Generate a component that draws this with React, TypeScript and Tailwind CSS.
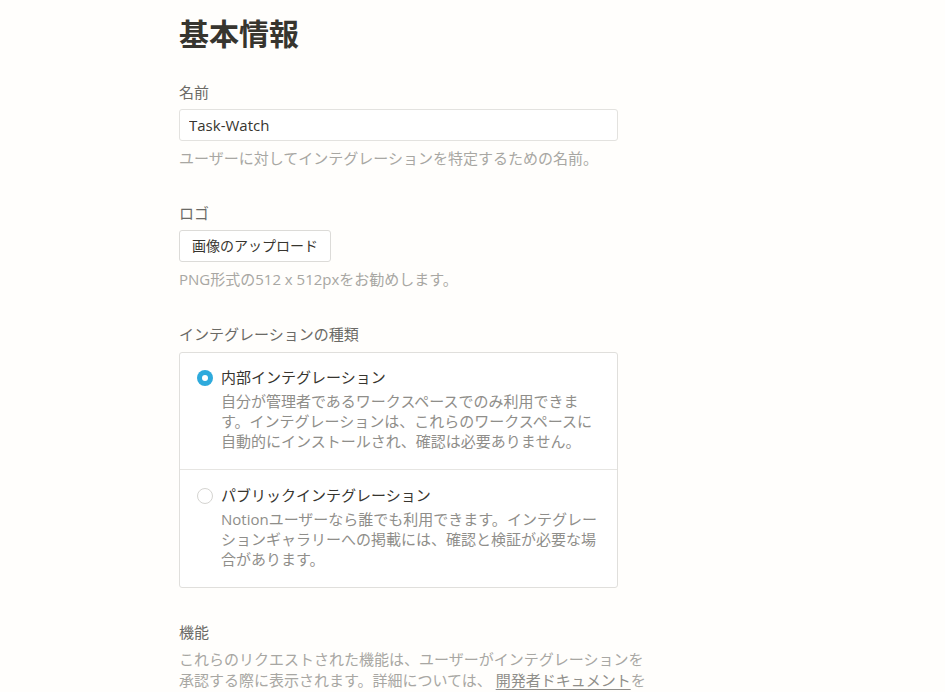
import React, { useState } from 'react';

const FONT = { fontFamily: '"Open Sans", "Noto Sans CJK JP", sans-serif' };

interface OptionProps {
  checked: boolean;
  title: string;
  description: string;
  onSelect: () => void;
  first?: boolean;
}

const Radio: React.FC<{ checked: boolean }> = ({ checked }) =>
  checked ? (
    <span className="flex h-4 w-4 shrink-0 items-center justify-center rounded-full bg-[#2eaadc]">
      <span className="h-[6px] w-[6px] rounded-full bg-white" />
    </span>
  ) : (
    <span className="h-4 w-4 shrink-0 rounded-full border-[1.5px] border-[#d5d4d1] bg-white" />
  );

const TypeOption: React.FC<OptionProps> = ({ checked, title, description, onSelect, first }) => (
  <div
    onClick={onSelect}
    className={`cursor-pointer pl-[17px] pr-[18px] pb-[18px] ${first ? 'pt-[14px]' : 'pt-[15px]'}`}
  >
    <div className="flex items-center gap-2">
      <Radio checked={checked} />
      <span className="text-[15px] leading-[21px] text-[#37352f]">{title}</span>
    </div>
    <p className="mt-[3px] pl-6 text-[15px] leading-[20px] text-[#8f8e8a]">{description}</p>
  </div>
);

export default function App() {
  const [name, setName] = useState('Task-Watch');
  const [kind, setKind] = useState<'internal' | 'public'>('internal');

  return (
    <div className="h-[692px] overflow-hidden bg-[#fffefc]" style={FONT}>
      <div className="ml-[179px] w-[470px] pt-[14px]">
        <h1 className="text-[30px] font-bold leading-[40px] text-[#37352f]">基本情報</h1>

        {/* 名前 */}
        <div className="mt-[28px]">
          <label className="block text-[15px] leading-[20px] text-[#6b6a66]">名前</label>
          <input
            type="text"
            value={name}
            onChange={(e) => setName(e.target.value)}
            className="mt-[7px] h-8 w-[439px] rounded-[3px] border border-[#e3e2df] bg-white px-[9px] text-[15px] text-[#37352f] outline-none"
          />
          <p className="mt-[7px] text-[15px] leading-[21px] text-[#a8a7a3]">
            ユーザーに対してインテグレーションを特定するための名前。
          </p>
        </div>

        {/* ロゴ */}
        <div className="mt-[34px]">
          <label className="block text-[15px] leading-[20px] text-[#6b6a66]">ロゴ</label>
          <button
            type="button"
            className="mt-[7px] h-8 rounded-[3px] border border-[#dcdbd8] bg-white px-3 text-[14px] leading-[20px] text-[#37352f]"
          >
            画像のアップロード
          </button>
          <p className="mt-[7px] text-[15px] leading-[21px] text-[#a8a7a3]">PNG形式の512 x 512pxをお勧めします。</p>
        </div>

        {/* インテグレーションの種類 */}
        <div className="mt-[34px]">
          <label className="block text-[15px] leading-[20px] text-[#6b6a66]">インテグレーションの種類</label>
          <div className="mt-[8px] w-[439px] divide-y divide-[#e6e5e2] rounded-[3px] border border-[#e0dfdc] bg-white">
            <TypeOption
              first
              checked={kind === 'internal'}
              onSelect={() => setKind('internal')}
              title="内部インテグレーション"
              description="自分が管理者であるワークスペースでのみ利用できます。インテグレーションは、これらのワークスペースに自動的にインストールされ、確認は必要ありません。"
            />
            <TypeOption
              checked={kind === 'public'}
              onSelect={() => setKind('public')}
              title="パブリックインテグレーション"
              description="Notionユーザーなら誰でも利用できます。インテグレーションギャラリーへの掲載には、確認と検証が必要な場合があります。"
            />
          </div>
        </div>

        {/* 機能 */}
        <div className="mt-[34px]">
          <label className="block text-[15px] leading-[20px] text-[#6b6a66]">機能</label>
          <p className="mt-[7px] text-[15px] leading-[21px] text-[#a8a7a3]">
            これらのリクエストされた機能は、ユーザーがインテグレーションを承認する際に表示されます。詳細については、{' '}
            <a href="#" className="text-[#8f8e8a] underline underline-offset-[3px]">
              開発者ドキュメント
            </a>
            を
          </p>
        </div>
      </div>
    </div>
  );
}
